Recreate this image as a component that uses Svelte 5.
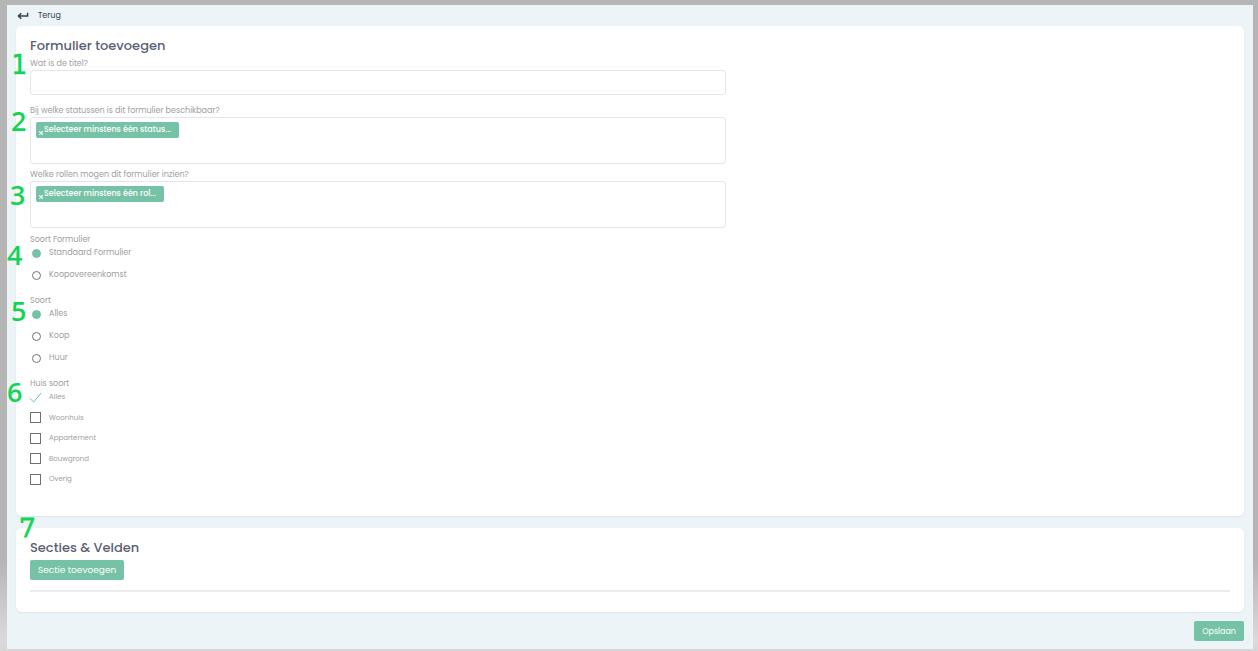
<script>
  let title = $state('');
  let formType = $state('Standaard Formulier');
  let saleType = $state('Alles');
  let houseTypes = $state([
    { name: 'Alles', checked: true },
    { name: 'Woonhuis', checked: false },
    { name: 'Appartement', checked: false },
    { name: 'Bouwgrond', checked: false },
    { name: 'Overig', checked: false }
  ]);
  const formTypes = ['Standaard Formulier', 'Koopovereenkomst'];
  const saleTypes = ['Alles', 'Koop', 'Huur'];
</script>

{#snippet tag(text)}
  <button type="button" class="tag">
    <svg viewBox="0 0 5 5" aria-hidden="true"><path d="M.5.5l4 4M4.5.5l-4 4" /></svg>{text}
  </button>
{/snippet}

<div class="page">
  <a class="back" href="#terug">
    <svg viewBox="0 0 12 8" aria-hidden="true"><path d="M10.6 .8V4H1.5M4.2 1.2L1.4 4L4.2 6.8" /></svg>
    Terug
  </a>

  <section class="card form">
    <h1>Formulier toevoegen</h1>
    <div class="group title">
      <span class="step one">1</span>
      <label class="caption" for="title">Wat is de titel?</label>
      <input id="title" class="field" type="text" bind:value={title} />
    </div>
    <div class="group">
      <span class="step two">2</span>
      <div class="caption" id="statuses">Bij welke statussen is dit formulier beschikbaar?</div>
      <div class="field multi" role="group" aria-labelledby="statuses">
        {@render tag('Selecteer minstens één status...')}
      </div>
    </div>
    <div class="group">
      <span class="step three">3</span>
      <div class="caption" id="roles">Welke rollen mogen dit formulier inzien?</div>
      <div class="field multi" role="group" aria-labelledby="roles">
        {@render tag('Selecteer minstens één rol...')}
      </div>
    </div>
    <fieldset class="group choices">
      <legend class="caption">Soort Formulier</legend>
      <span class="step four">4</span>
      <div class="options">
        {#each formTypes as item}
          <label><input type="radio" name="form-type" value={item} bind:group={formType} />{item}</label>
        {/each}
      </div>
    </fieldset>
    <fieldset class="group choices">
      <legend class="caption">Soort</legend>
      <span class="step five">5</span>
      <div class="options">
        {#each saleTypes as item}
          <label><input type="radio" name="sale-type" value={item} bind:group={saleType} />{item}</label>
        {/each}
      </div>
    </fieldset>
    <fieldset class="group choices">
      <legend class="caption">Huis soort</legend>
      <span class="step six">6</span>
      <div class="options houses">
        {#each houseTypes as item}
          <label>
            <input type="checkbox" bind:checked={item.checked} />
            <svg class="tick" viewBox="0 0 13 11" aria-hidden="true"><path d="M.7 6.2L4.7 10L12.3.8" /></svg>
            {item.name}
          </label>
        {/each}
      </div>
    </fieldset>
  </section>

  <section class="card sections">
    <span class="step seven">7</span>
    <h2>Secties &amp; Velden</h2>
    <button type="button" class="btn">Sectie toevoegen</button>
    <hr />
  </section>

  <div class="actions"><button type="button" class="btn save">Opslaan</button></div>
</div>

<style>
  :global(body) {
    background: linear-gradient(#b4b5b4 0, #b4b5b4 560px, #dadada 640px, #d6d6d6);
  }
  .page {
    margin: 0 5px 0 7px;
    border-top: 5px solid #b4b5b4;
    border-bottom: 3px solid #d6d6d6;
    padding: 4px 9px 8px;
    background: #ecf4f8;
    background-clip: padding-box;
    color: #a0a0a0;
    font: 8px/12px Poppins, Inter, sans-serif;
  }
  .page, .page * { box-sizing: border-box; }
  button, input { font: inherit; }
  .back {
    display: flex;
    width: max-content;
    align-items: center;
    gap: 9px;
    padding: 1px 0 0 1px;
    color: #3a4050;
    text-decoration: none;
  }
  .back svg { width: 12px; height: 8px; stroke-width: 1.5; }
  svg { fill: none; stroke: currentColor; }
  .card {
    position: relative;
    border-radius: 6px;
    background: #fff;
    box-shadow: 0 1px 2px #dce5ea;
    padding: 9px 14px 0;
  }
  .form { margin-top: 4px; padding-bottom: 17px; }
  .sections { margin-top: 12px; padding-bottom: 20px; }
  h1, h2 {
    margin: 0;
    color: #5a6173;
    font-size: 13px;
    font-weight: 500;
    line-height: 21px;
  }
  .group {
    position: relative;
    width: 58%;
    margin: 0 0 5px;
    padding: 0;
    border: 0;
  }
  .title { margin: 2px 0 10px; }
  .caption { display: block; padding: 0; }
  .field {
    display: block;
    width: 100%;
    height: 25px;
    border: 1px solid #e6e6e6;
    border-radius: 3px;
    background: #fff;
    padding: 4px 5px;
  }
  .multi { height: 47px; }
  .tag {
    display: flex;
    align-items: center;
    gap: 1px;
    height: 16px;
    border: 0;
    border-radius: 2px;
    background: #76c2a6;
    color: #fff;
    font-weight: 500;
    padding: 0 8px 0 3px;
  }
  .tag svg { flex: none; width: 4px; height: 4px; margin-top: 5px; stroke-width: 1.6; }
  .choices { margin: 6px 0 14px; }
  .options { display: flex; flex-direction: column; gap: 10px; padding-top: 1px; }
  .options label {
    position: relative;
    display: flex;
    width: max-content;
    height: 12px;
    align-items: center;
  }
  .options input { appearance: none; background: #fff; }
  .options input[type='radio'] {
    width: 9px;
    height: 9px;
    margin: 0 8px 0 2px;
    border: 1px solid #757575;
    border-radius: 50%;
  }
  .options input[type='radio']:checked { border-color: #76c2a6; background: #76c2a6; }
  .houses { height: 95px; gap: 0; justify-content: space-between; font-size: 7px; }
  .options input[type='checkbox'] {
    width: 11px;
    height: 11px;
    margin: 0 8px 0 0;
    border: 1px solid #707070;
  }
  .options input[type='checkbox']:checked { border-color: transparent; }
  .tick { position: absolute; left: -1px; top: 1px; width: 13px; height: 11px; color: #76c2a6; display: none; }
  input:checked + .tick { display: block; }
  .btn {
    display: block;
    height: 20px;
    border: 0;
    border-radius: 2px;
    background: #76c2a6;
    color: #fff;
    padding: 0 8px;
  }
  .sections .btn { margin-top: 2px; font-size: 9px; }
  hr { margin: 10px 0 0; border: 0; border-top: 2px solid #ececec; }
  .actions { display: flex; justify-content: flex-end; margin-top: 9px; }
  .save { padding-top: 2px; }
  .step {
    position: absolute;
    color: #15d453;
    font: 600 27px/26px "Open Sans", sans-serif;
  }
  .one { left: -19px; top: -6px; font: 26px/26px "DejaVu Sans Mono", monospace; -webkit-text-stroke: 0.5px; }
  .two { left: -19px; top: 3px; }
  .three { left: -20px; top: 13px; }
  .four { left: -23px; top: -4px; }
  .five { left: -19px; top: -9px; }
  .six { left: -23px; top: -11px; }
  .seven { left: 3px; top: -13px; font: 26px/26px "DejaVu Serif", serif; -webkit-text-stroke: 1px; }
</style>
